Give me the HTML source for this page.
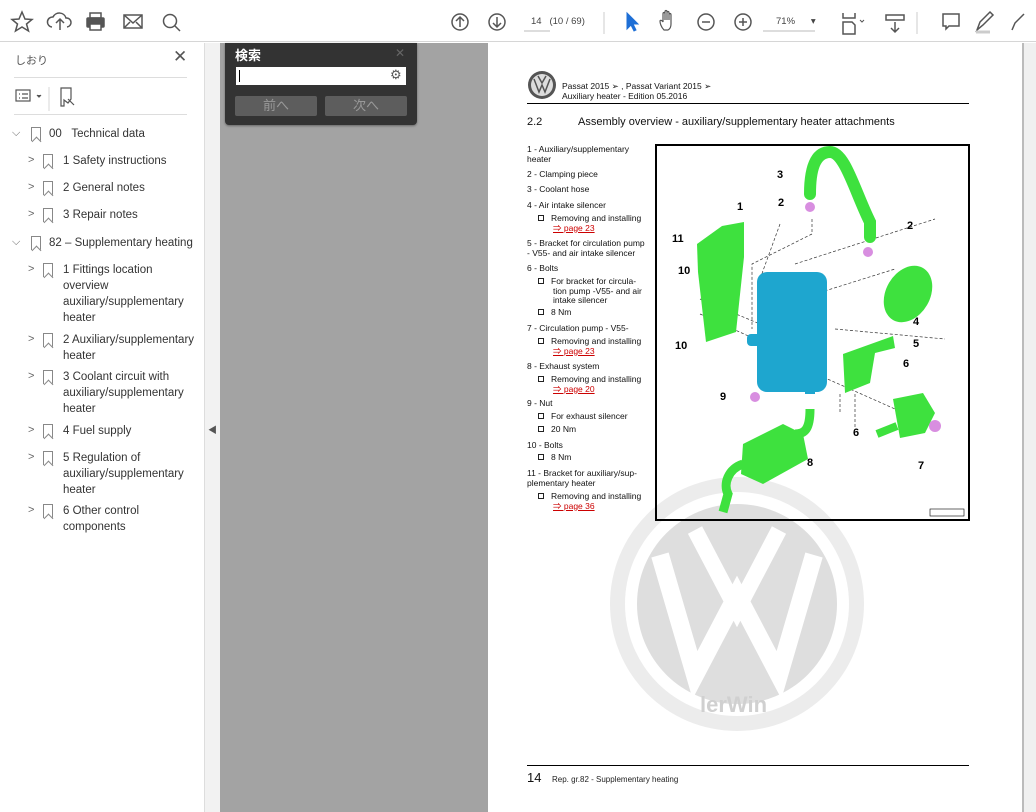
<!DOCTYPE html>
<html><head><meta charset="utf-8"><style>
*{margin:0;padding:0;box-sizing:border-box}
body{width:1036px;height:812px;overflow:hidden;background:#fff;font-family:"Liberation Sans","Noto Sans CJK JP",sans-serif;position:relative}
.abs{position:absolute}
#tb{left:0;top:0;width:1036px;height:42px;background:#fff;border-bottom:1px solid #d6d6d6}
#left{left:0;top:43px;width:205px;height:769px;background:#fff;border-right:1px solid #ddd}
#split{left:205px;top:43px;width:15px;height:769px;background:#f2f2f2}
#gray{left:220px;top:43px;width:268px;height:769px;background:#a3a3a3}
#page{left:488px;top:43px;width:534px;height:769px;background:#fff}
#sb{left:1022px;top:43px;width:14px;height:769px;background:#f0f0f0;border-left:2px solid #bbb}
.it{position:absolute;font-size:11.5px;color:#333;line-height:16px}
.chev{position:absolute;font-size:11px;color:#666}
.bm{position:absolute;width:10px;height:14px;border:1.5px solid #888;border-bottom:none}
.bm:after{content:"";position:absolute;left:0.5px;bottom:-4px;width:6px;height:6px;border-left:1.5px solid #888;border-top:1.5px solid #888;transform:rotate(45deg);background:#fff}
.pt{position:absolute;font-size:8.5px;color:#111;line-height:9.5px}
.red{color:#c00;text-decoration:underline}
.sq{display:inline-block;width:6px;height:6px;border:1px solid #222;margin-right:7px}
</style></head><body>
<div id="tb" class="abs">
<svg width="1036" height="42" style="position:absolute;left:0;top:0" fill="none" stroke="#555" stroke-width="1.5">
<path d="M22 12l3 7 7 .5-5.5 4.5 2 7-6.5-4-6.5 4 2-7-5.5-4.5 7-.5z"/>
<path d="M52 27a5 5 0 0 1 1-10 7 7 0 0 1 13 1 4.5 4.5 0 0 1 1 9M60 30v-10M56 23l4-4 4 4"/>
<rect x="87" y="18" width="17" height="9" rx="1" fill="#555"/><rect x="90" y="13" width="11" height="5"/><rect x="90" y="24" width="11" height="6" fill="#fff"/>
<rect x="124" y="15" width="18" height="13"/><path d="M124 15l9 8 9-8M124 28l6-6M142 28l-6-6"/>
<circle cx="170" cy="21" r="6.5"/><path d="M175 26l5 5"/>
<circle cx="460" cy="22" r="8"/><path d="M460 27v-10M456 21l4-4 4 4"/>
<circle cx="497" cy="22" r="8"/><path d="M497 17v10M493 23l4 4 4-4"/>
<path d="M604 12v22M917 12v22" stroke="#ddd"/>
<path d="M524 31h26M763 31h52" stroke="#bbb" stroke-width="1"/>
<path d="M627 13l0 16 4-4 3 6 2-1-3-6 5 0z" fill="#1e6fd6" stroke="#1e6fd6" stroke-width="1"/>
<path d="M664 30c-3-3-4-7-4-9 0-1 2-1 3 1v-8c0-2 2-2 2 0v6-8c0-2 2-2 2 0v8-7c0-2 2-2 2 0v7-5c0-2 2-2 2 0v9c0 3-1 5-3 6z" stroke-width="1.2"/>
<circle cx="706" cy="22" r="8"/><path d="M702 22h8"/>
<circle cx="743" cy="22" r="8"/><path d="M739 22h8M743 18v8"/>
<path d="M843 13v5h12v-5M843 34v-12h9l3 3v9z"/><path d="M860 20l2 2 2-2" stroke-width="1"/>
<rect x="886" y="15" width="18" height="5"/><path d="M895 22v10M891 28l4 4 4-4"/>
<path d="M943 14h16v12h-10l-3 3v-3h-3z"/>
<path d="M977 30l3-8 10-10 3 3-10 10z"/><path d="M976 32h14" stroke="#ccc" stroke-width="3"/>
<path d="M1012 30l3-7 9-9"/>
</svg>
<span class="abs" style="left:531px;top:16px;font-size:9.5px;color:#444">14&nbsp;&nbsp;&nbsp;(10 / 69)</span>
<span class="abs" style="left:776px;top:16px;font-size:9.5px;color:#444">71%&nbsp;&nbsp;&nbsp;&nbsp;&nbsp;&nbsp;▾</span>
</div>
<div id="left" class="abs">
<span class="abs" style="left:15px;top:9px;font-size:11px;color:#555">しおり</span>
<span class="abs" style="left:173px;top:4px;font-size:17px;color:#555">✕</span>
<div class="abs" style="left:14px;top:34px;width:173px;height:1px;background:#ddd"></div>
<svg class="abs" style="left:14px;top:42px" width="70" height="26" fill="none" stroke="#555" stroke-width="1.2"><rect x="2" y="5" width="14" height="11"/><path d="M5 9h1M8 9h6M5 13h1M8 13h6"/><path d="M23 10l2 2 2-2" fill="#555"/><path d="M35 2v24" stroke="#ddd"/><path d="M47 3h10v11l-3 4-4-3v6h-3z"/><path d="M54 14l6 6"/></svg>
<div class="abs" style="left:14px;top:71px;width:173px;height:1px;background:#ddd"></div>
</div>
<div id="split" class="abs"><span class="abs" style="left:3px;top:380px;font-size:9px;color:#555">◀</span></div>
<div id="gray" class="abs">
<div class="abs" style="left:5px;top:0;width:192px;height:82px;background:#333;border-radius:0 0 4px 4px;box-shadow:0 1px 2px #666">
<span class="abs" style="left:10px;top:2px;font-size:13px;color:#fff;font-weight:bold">検索</span>
<span class="abs" style="left:170px;top:3px;font-size:12px;color:#666">✕</span>
<div class="abs" style="left:11px;top:24px;width:170px;height:18px;background:#fff"><div class="abs" style="left:3px;top:3px;width:1px;height:12px;background:#000"></div><span class="abs" style="left:154px;top:0;font-size:13px;color:#555">⚙</span></div>
<div class="abs" style="left:10px;top:53px;width:82px;height:20px;background:#5d5d5d;border-radius:2px;color:#999;font-size:13px;text-align:center;line-height:20px">前へ</div>
<div class="abs" style="left:100px;top:53px;width:82px;height:20px;background:#5d5d5d;border-radius:2px;color:#999;font-size:13px;text-align:center;line-height:20px">次へ</div>
</div>
</div>
<div id="page" class="abs"></div>
<div id="sb" class="abs"></div>

<!-- bookmarks -->
<div class="chev" style="left:12px;top:127px">⌵</div><div class="bm" style="left:31px;top:127px"></div><div class="it" style="left:49px;top:126px">00&nbsp;&nbsp;&nbsp;Technical data</div>
<div class="chev" style="left:28px;top:154px">&gt;</div><div class="bm" style="left:43px;top:154px"></div><div class="it" style="left:63px;top:153px">1 Safety instructions</div>
<div class="chev" style="left:28px;top:181px">&gt;</div><div class="bm" style="left:43px;top:181px"></div><div class="it" style="left:63px;top:180px">2 General notes</div>
<div class="chev" style="left:28px;top:208px">&gt;</div><div class="bm" style="left:43px;top:208px"></div><div class="it" style="left:63px;top:207px">3 Repair notes</div>
<div class="chev" style="left:12px;top:236px">⌵</div><div class="bm" style="left:31px;top:236px"></div><div class="it" style="left:49px;top:235px">82 – Supplementary heating</div>
<div class="chev" style="left:28px;top:263px">&gt;</div><div class="bm" style="left:43px;top:263px"></div><div class="it" style="left:63px;top:262px">1 Fittings location<br>overview<br>auxiliary/supplementary<br>heater</div>
<div class="chev" style="left:28px;top:333px">&gt;</div><div class="bm" style="left:43px;top:333px"></div><div class="it" style="left:63px;top:332px">2 Auxiliary/supplementary<br>heater</div>
<div class="chev" style="left:28px;top:370px">&gt;</div><div class="bm" style="left:43px;top:370px"></div><div class="it" style="left:63px;top:369px">3 Coolant circuit with<br>auxiliary/supplementary<br>heater</div>
<div class="chev" style="left:28px;top:424px">&gt;</div><div class="bm" style="left:43px;top:424px"></div><div class="it" style="left:63px;top:423px">4 Fuel supply</div>
<div class="chev" style="left:28px;top:451px">&gt;</div><div class="bm" style="left:43px;top:451px"></div><div class="it" style="left:63px;top:450px">5 Regulation of<br>auxiliary/supplementary<br>heater</div>
<div class="chev" style="left:28px;top:504px">&gt;</div><div class="bm" style="left:43px;top:504px"></div><div class="it" style="left:63px;top:503px">6 Other control<br>components</div>

<!-- watermark -->
<svg class="abs" style="left:600px;top:470px" width="280" height="270"><circle cx="137" cy="134" r="127" fill="#ececec"/><circle cx="137" cy="134" r="112" fill="#fff"/><circle cx="137" cy="134" r="100" fill="#dedede"/><path d="M60 85l35 120 42-80 42 80 35-120" stroke="#fff" stroke-width="18" fill="none"/><path d="M95 60l42 80 42-80" stroke="#fff" stroke-width="16" fill="none"/><text x="100" y="242" font-size="22" font-weight="bold" fill="#d0d0d0" font-family="Liberation Sans">lerWin</text></svg>

<!-- page header -->
<svg class="abs" style="left:527px;top:70px" width="30" height="30"><circle cx="15" cy="15" r="14" fill="#555"/><circle cx="15" cy="15" r="11" fill="#ddd"/><path d="M7 9l5 13 3-7 3 7 5-13M11 6l4 7 4-7" stroke="#555" stroke-width="1.5" fill="none"/></svg>
<div class="pt" style="left:562px;top:82px">Passat 2015 ➢ , Passat Variant 2015 ➢<br>Auxiliary heater - Edition 05.2016</div>
<div class="abs" style="left:527px;top:103px;width:442px;height:1px;background:#000"></div>
<div class="abs" style="left:527px;top:116px;font-size:11px;color:#111">2.2</div>
<div class="abs" style="left:578px;top:116px;font-size:11px;color:#111">Assembly overview - auxiliary/supplementary heater attachments</div>

<div class="pt" style="left:527px;top:145px">1 - Auxiliary/supplementary<br>heater</div>
<div class="pt" style="left:527px;top:170px">2 - Clamping piece</div>
<div class="pt" style="left:527px;top:185px">3 - Coolant hose</div>
<div class="pt" style="left:527px;top:201px">4 - Air intake silencer</div>
<div class="pt" style="left:538px;top:214px"><span class="sq"></span>Removing and installing<br><span style="padding-left:15px" class="red">⇒ page 23</span></div>
<div class="pt" style="left:527px;top:239px">5 - Bracket for circulation pump<br>- V55- and air intake silencer</div>
<div class="pt" style="left:527px;top:264px">6 - Bolts</div>
<div class="pt" style="left:538px;top:277px"><span class="sq"></span>For bracket for circula-<br><span style="padding-left:15px">tion pump -V55- and air</span><br><span style="padding-left:15px">intake silencer</span></div>
<div class="pt" style="left:538px;top:308px"><span class="sq"></span>8 Nm</div>
<div class="pt" style="left:527px;top:324px">7 - Circulation pump - V55-</div>
<div class="pt" style="left:538px;top:337px"><span class="sq"></span>Removing and installing<br><span style="padding-left:15px" class="red">⇒ page 23</span></div>
<div class="pt" style="left:527px;top:362px">8 - Exhaust system</div>
<div class="pt" style="left:538px;top:375px"><span class="sq"></span>Removing and installing<br><span style="padding-left:15px" class="red">⇒ page 20</span></div>
<div class="pt" style="left:527px;top:399px">9 - Nut</div>
<div class="pt" style="left:538px;top:412px"><span class="sq"></span>For exhaust silencer</div>
<div class="pt" style="left:538px;top:425px"><span class="sq"></span>20 Nm</div>
<div class="pt" style="left:527px;top:441px">10 - Bolts</div>
<div class="pt" style="left:538px;top:453px"><span class="sq"></span>8 Nm</div>
<div class="pt" style="left:527px;top:469px">11 - Bracket for auxiliary/sup-<br>plementary heater</div>
<div class="pt" style="left:538px;top:492px"><span class="sq"></span>Removing and installing<br><span style="padding-left:15px" class="red">⇒ page 36</span></div>

<!-- illustration -->
<svg class="abs" style="left:655px;top:144px" width="316" height="378" font-family="Liberation Sans" font-size="11" font-weight="bold">
<rect x="1" y="1" width="313" height="375" fill="none" stroke="#000" stroke-width="2"/>
<g stroke="#333" stroke-width="0.7" fill="none" stroke-dasharray="3 2"><path d="M157 75v15l-60 30v65M125 80l-20 55M140 120L280 75M160 150L240 125M45 155l120 50M45 170l110 50M150 225l90 40M200 250v35M180 185l110 10M185 250v20"/></g>
<path d="M155 50c0-25 5-42 20-42s25 40 40 70l0 15" stroke="#3ee13e" stroke-width="12" fill="none" stroke-linecap="round"/>
<path d="M42 100l25-18 22-4 0 35-8 75-30 10-8-70z" fill="#3ee13e"/>
<rect x="102" y="128" width="70" height="120" rx="10" fill="#1ea6cf"/>
<rect x="92" y="190" width="25" height="12" rx="4" fill="#1ea6cf"/>
<ellipse cx="253" cy="150" rx="22" ry="30" fill="#3ee13e" transform="rotate(30 253 150)"/>
<path d="M188 210l50-18 2 12-20 5-5 30-25 10z" fill="#3ee13e"/>
<path d="M238 255l30-6 12 20-10 20-25 5z" fill="#3ee13e"/><path d="M222 290l20-8" stroke="#3ee13e" stroke-width="8"/>
<rect x="150" y="230" width="10" height="20" fill="#1ea6cf"/>
<path d="M88 300l40-20 20 10 5 25-45 25-22-10z" fill="#3ee13e"/>
<path d="M155 265c0 20-5 25-15 25" stroke="#3ee13e" stroke-width="9" fill="none"/>
<path d="M88 320c-15 5-20 20-15 30l-5 18" stroke="#3ee13e" stroke-width="9" fill="none"/>
<circle cx="155" cy="63" r="5" fill="#d88ee0"/><circle cx="213" cy="108" r="5" fill="#d88ee0"/><circle cx="100" cy="253" r="5" fill="#d88ee0"/><circle cx="280" cy="282" r="6" fill="#d88ee0"/>
<text x="122" y="34">3</text><text x="123" y="62">2</text><text x="82" y="66">1</text><text x="252" y="85">2</text><text x="17" y="98">11</text><text x="23" y="130">10</text><text x="20" y="205">10</text><text x="258" y="181">4</text><text x="258" y="203">5</text><text x="248" y="223">6</text><text x="65" y="256">9</text><text x="198" y="292">6</text><text x="152" y="322">8</text><text x="263" y="325">7</text>
<rect x="275" y="365" width="34" height="7" fill="#fff" stroke="#000" stroke-width="0.6"/>
</svg>

<!-- footer -->
<div class="abs" style="left:527px;top:765px;width:442px;height:1px;background:#000"></div>
<div class="abs" style="left:527px;top:770px;font-size:13px;color:#111">14</div>
<div class="abs" style="left:552px;top:775px;font-size:8px;color:#222">Rep. gr.82 - Supplementary heating</div>
</body></html>
